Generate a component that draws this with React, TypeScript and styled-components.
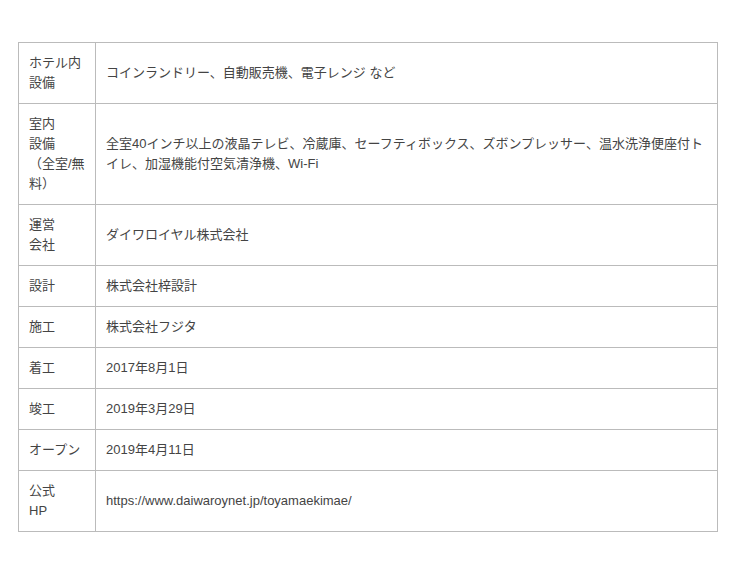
import React from "react";
import styled, { createGlobalStyle } from "styled-components";

const Global = createGlobalStyle`
  html, body { margin: 0; padding: 0; background: #fff; }
  body {
    font-family: "Liberation Sans", "Noto Sans CJK JP", sans-serif;
    color: #444;
  }
`;

const Page = styled.div`
  padding: 42px 22px 40px 18px;
`;

const Table = styled.table`
  width: 700px;
  border-collapse: collapse;
  font-size: 13px;
  line-height: 20px;
`;

const Head = styled.th`
  width: 56px;
  padding: 10px;
  border: 1px solid #bbb;
  text-align: left;
  font-weight: normal;
  vertical-align: middle;
`;

const Cell = styled.td`
  padding: 10px;
  border: 1px solid #bbb;
  vertical-align: middle;
`;

type Row = { head: string[]; value: string };

const rows: Row[] = [
  { head: ["ホテル内", "設備"], value: "コインランドリー、自動販売機、電子レンジ など" },
  {
    head: ["室内", "設備", "（全室/無", "料）"],
    value:
      "全室40インチ以上の液晶テレビ、冷蔵庫、セーフティボックス、ズボンプレッサー、温水洗浄便座付トイレ、加湿機能付空気清浄機、Wi-Fi",
  },
  { head: ["運営", "会社"], value: "ダイワロイヤル株式会社" },
  { head: ["設計"], value: "株式会社梓設計" },
  { head: ["施工"], value: "株式会社フジタ" },
  { head: ["着工"], value: "2017年8月1日" },
  { head: ["竣工"], value: "2019年3月29日" },
  { head: ["オープン"], value: "2019年4月11日" },
  { head: ["公式", "HP"], value: "https://www.daiwaroynet.jp/toyamaekimae/" },
];

export default function App() {
  return (
    <>
      <Global />
      <Page>
        <Table>
          <tbody>
            {rows.map((r, i) => (
              <tr key={i}>
                <Head>
                  {r.head.map((h, j) => (
                    <React.Fragment key={j}>
                      {j > 0 && <br />}
                      {h}
                    </React.Fragment>
                  ))}
                </Head>
                <Cell>{r.value}</Cell>
              </tr>
            ))}
          </tbody>
        </Table>
      </Page>
    </>
  );
}
